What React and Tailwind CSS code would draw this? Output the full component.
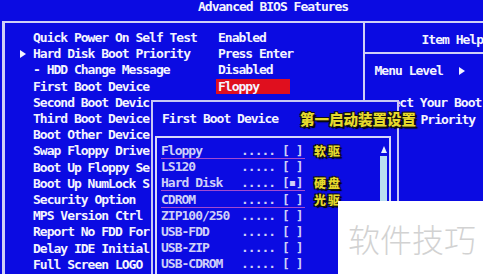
import React from 'react';

const mono = "font-['DejaVu_Sans_Mono','Liberation_Mono',monospace] font-bold text-[13px] tracking-[-1px]";
const cjk = "font-['Noto_Sans_CJK_SC',sans-serif] font-black text-[#e6da2c] [text-shadow:1px_1px_0_#111,-1px_-1px_0_#111,1px_-1px_0_#111,-1px_1px_0_#111,2px_2px_1px_#000]";

// rows behind the popup are shown only as far as they peek out
const setupRows = [
  { arrow: false, label: 'Quick Power On Self Test', value: 'Enabled' },
  { arrow: true, label: 'Hard Disk Boot Priority', value: 'Press Enter' },
  { arrow: false, label: '- HDD Change Message', value: 'Disabled' },
  { arrow: false, label: 'First Boot Device', value: 'Floppy', active: true },
  { arrow: false, label: 'Second Boot Devic' },
  { arrow: false, label: 'Third Boot Device' },
  { arrow: false, label: 'Boot Other Device' },
  { arrow: false, label: 'Swap Floppy Drive' },
  { arrow: false, label: 'Boot Up Floppy Se' },
  { arrow: false, label: 'Boot Up NumLock S' },
  { arrow: false, label: 'Security Option' },
  { arrow: false, label: 'MPS Version Ctrl' },
  { arrow: false, label: 'Report No FDD For' },
  { arrow: false, label: 'Delay IDE Initial' },
  { arrow: false, label: 'Full Screen LOGO' },
];

const bootItems = [
  { name: 'Floppy', note: '软驱', line: true },
  { name: 'LS120' },
  { name: 'Hard Disk', checked: true, note: '硬盘', line: true },
  { name: 'CDROM', note: '光驱', line: true },
  { name: 'ZIP100/250' },
  { name: 'USB-FDD' },
  { name: 'USB-ZIP' },
  { name: 'USB-CDROM' },
];

const Triangle = () => (
  <svg width="6" height="8" viewBox="0 0 6 8" className="inline-block">
    <polygon points="0,0 6,4 0,8" fill="#f4f4ff" />
  </svg>
);

const App = () => {
  return (
    <div className={`relative w-[483px] h-[274px] overflow-hidden bg-[#0b0be2] text-[#f4f4ff] ${mono}`}>
      {/* title */}
      <div className="h-[21px] pl-[198px] leading-[13px] whitespace-nowrap">Advanced BIOS Features</div>

      {/* main frame */}
      <div className="ml-[2px] flex border-t-2 border-l-[3px] border-[#cfcff6] h-[260px]">
        <div className="w-[364px] pt-[7px] overflow-hidden">
          {setupRows.map((row, i) => (
            <div key={i} className="flex h-[16.2px] items-center leading-[16px] whitespace-nowrap">
              <div className="w-[28px] flex justify-end pr-[7px]">{row.arrow && <Triangle />}</div>
              <div className="w-[185px]">{row.label}</div>
              {row.value && (
                <div className={row.active ? 'bg-[#e00f1e] w-[74px] pl-[2px] -ml-[2px] leading-[15px]' : ''}>{row.value}</div>
              )}
            </div>
          ))}
        </div>

        <div className="flex-1 border-l-2 border-[#cfcff6] whitespace-nowrap">
          <div className="h-[29px] pl-[57px] pt-[10px] leading-[13px]">Item Help</div>
          <div className="border-t-2 border-[#cfcff6] pl-[10px] pt-[9px] leading-[16.2px]">
            <div className="flex items-center h-[16.2px]">
              <span>Menu Level</span>
              <span className="ml-[16px] flex"><Triangle /></span>
            </div>
            <div className="h-[16.2px]" />
            <div className="h-[16.2px] pl-[18px]">ect Your Boot</div>
            <div className="h-[16.2px] pl-[46px]">Priority</div>
          </div>
        </div>
      </div>

      {/* First Boot Device popup */}
      <div className="absolute left-[151px] top-[100px] w-[248px] h-[190px] bg-[#0b0be2] border-2 border-[#c8c8f4]">
        <div className="h-[34px] flex items-center pl-[9px] whitespace-nowrap">
          <span>First Boot Device</span>
          <span className={`ml-[22px] text-[14.5px] tracking-[0px] ${cjk}`}>第一启动装置设置</span>
        </div>
        <div className="ml-[2px] mr-[6px] h-[160px] flex border-t-2 border-l-2 border-r-2 border-[#d8d8fa]">
          <div className="flex-1 pt-[5px] pl-[4px] text-[#cfcff8]">
            {bootItems.map((item) => (
              <div key={item.name} className="flex items-center h-[16.2px] leading-[16px] whitespace-nowrap">
                <span className={`flex w-[144px] ${item.line ? 'shadow-[inset_0_-1px_0_#a24ad0]' : ''}`}>
                  <span className="w-[80px]">{item.name}</span>
                  <span>..... [{item.checked ? '▪' : ' '}]</span>
                </span>
                {item.note && <span className={`ml-[9px] text-[12px] tracking-[2px] leading-[12px] ${cjk}`}>{item.note}</span>}
              </div>
            ))}
          </div>
          <div className="w-[7px] mr-[2px] flex flex-col items-center pt-[8px]">
            <svg width="6" height="7" viewBox="0 0 6 7">
              <polygon points="3,0 6,7 0,7" fill="#e8f4ff" />
            </svg>
            <div className="mt-[3px] w-full flex-1 bg-[#b9def0]" />
          </div>
        </div>
      </div>

      {/* watermark */}
      <div className="absolute left-[338px] top-[201px] w-[145px] h-[73px] bg-white flex items-center pl-[10px]">
        <span className="font-['Noto_Sans_CJK_SC',sans-serif] font-light text-[32px] tracking-[0px] text-[#d2d2d2] leading-none">软件技巧</span>
      </div>
    </div>
  );
};

export default App;
